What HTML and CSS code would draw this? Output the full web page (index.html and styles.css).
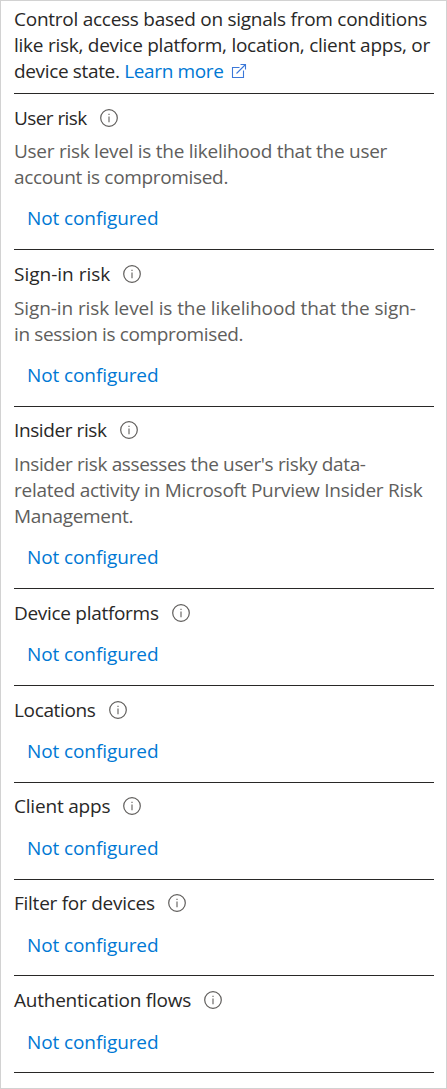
FILE: index.html
```html
<!DOCTYPE html>
<html lang="en">
<head>
<meta charset="utf-8">
<title>Conditions</title>
<link rel="stylesheet" href="styles.css">
</head>
<body>
<svg class="symbols" aria-hidden="true">
  <symbol id="info" viewBox="0 0 18 18"><circle cx="9" cy="9" r="8.3" fill="none" stroke="currentColor" stroke-width="1.2"/><path d="M9 7.4v5.8M9 4.8v1.3" stroke="currentColor" stroke-width="1.1" fill="none"/></symbol>
</svg>
<main class="panel">
  <p class="intro"><span class="line l1">Control access based on signals from conditions</span> <span class="line l2">like risk, device platform, location, client apps, or</span> <span class="line l3">device state. <a class="link">Learn more</a><svg class="external" viewBox="0 0 16 16"><path d="M8.5 4.5H1.5V14.5H12.5V7.5M5.5 10.5L14.5 1.5M9.5 1.5H14.5V6.5" fill="none" stroke="currentColor" stroke-width="1.1"/></svg></span></p>
  <section class="condition"><h2 class="title"><span class="t1">User risk</span><svg class="info"><use href="#info"/></svg></h2>
    <p class="description"><span class="line d1">User risk level is the likelihood that the user</span> <span class="line d2">account is compromised.</span></p>
    <a class="value">Not configured</a></section>
  <section class="condition signin"><h2 class="title"><span class="t2">Sign-in risk</span><svg class="info"><use href="#info"/></svg></h2>
    <p class="description"><span class="line d3">Sign-in risk level is the likelihood that the sign-</span><span class="line d4">in session is compromised.</span></p>
    <a class="value">Not configured</a></section>
  <section class="condition insider"><h2 class="title"><span class="t3">Insider risk</span><svg class="info"><use href="#info"/></svg></h2>
    <p class="description"><span class="line d5">Insider risk assesses the user's risky data-</span><span class="line d6">related activity in Microsoft Purview Insider Risk</span> <span class="line d7">Management.</span></p>
    <a class="value">Not configured</a></section>
  <section class="condition"><h2 class="title"><span class="t4">Device platforms</span><svg class="info"><use href="#info"/></svg></h2>
    <a class="value">Not configured</a></section>
  <section class="condition"><h2 class="title"><span class="t5">Locations</span><svg class="info"><use href="#info"/></svg></h2>
    <a class="value">Not configured</a></section>
  <section class="condition raised"><h2 class="title"><span class="t6">Client apps</span><svg class="info"><use href="#info"/></svg></h2>
    <a class="value">Not configured</a></section>
  <section class="condition raised devices"><h2 class="title"><span class="t7">Filter for devices</span><svg class="info"><use href="#info"/></svg></h2>
    <a class="value">Not configured</a></section>
  <section class="condition flows"><h2 class="title"><span class="t8">Authentication flows</span><svg class="info"><use href="#info"/></svg></h2>
    <a class="value">Not configured</a></section>
</main>
</body>
</html>
```
FILE: styles.css
```css
* { box-sizing: border-box; }
body { margin: 0; background: #fff; color: #292827; font: 19px/26px "Open Sans", "Noto Sans", sans-serif; }
.symbols { display: none; }
.panel { height: 1089px; padding: 5px 12px 0 13px; border: 1px solid #d2d2d2; overflow: hidden; }
.intro, .description, .title { margin: 0; }
.intro { height: 88px; border-bottom: 1px solid #292827; }
.line { display: block; height: 26px; white-space: nowrap; width: max-content; }
.link, .value { color: #0078d4; }
.external { width: 16px; height: 16px; margin-left: 7px; vertical-align: -1px; color: #3c78d8; }
.condition { display: flex; flex-direction: column; align-items: flex-start; padding: 11px 0 18px; border-bottom: 1px solid #292827; }
.title { display: flex; align-items: center; gap: 13px; height: 26px; font-size: inherit; font-weight: 400; white-space: nowrap; }
.info { width: 18px; height: 18px; color: #605e5c; }
.description { margin-top: 7px; color: #605e5c; }
.value { margin: 15px 0 0 13px; letter-spacing: -0.1px; }
.signin .description, .insider .description { margin-top: 8px; }
.insider, .raised { padding-top: 10px; }
.raised .value { margin-top: 16px; }
.devices { padding-bottom: 17px; }
.flows .value { margin-top: 16px; }
.flows { padding-bottom: 17px; }

/* Tracking for each line of copy */
.l1 { letter-spacing: -0.26px; }
.l2 { letter-spacing: -0.26px; }
.l3 { letter-spacing: -0.35px; }
.d1 { letter-spacing: -0.27px; }
.d2 { letter-spacing: -0.33px; }
.d3 { letter-spacing: -0.1px; }
.d4 { letter-spacing: -0.36px; }
.d5 { letter-spacing: -0.36px; }
.d6 { letter-spacing: -0.26px; }
.d7 { letter-spacing: -0.3px; }
.t1 { letter-spacing: -0.58px; }
.t2 { letter-spacing: 0; }
.t3 { letter-spacing: -0.4px; }
.t4 { letter-spacing: -0.3px; }
.t5 { letter-spacing: -0.35px; }
.t6 { letter-spacing: -0.2px; }
.t7 { letter-spacing: -0.26px; }
.t8 { letter-spacing: -0.23px; }
```
